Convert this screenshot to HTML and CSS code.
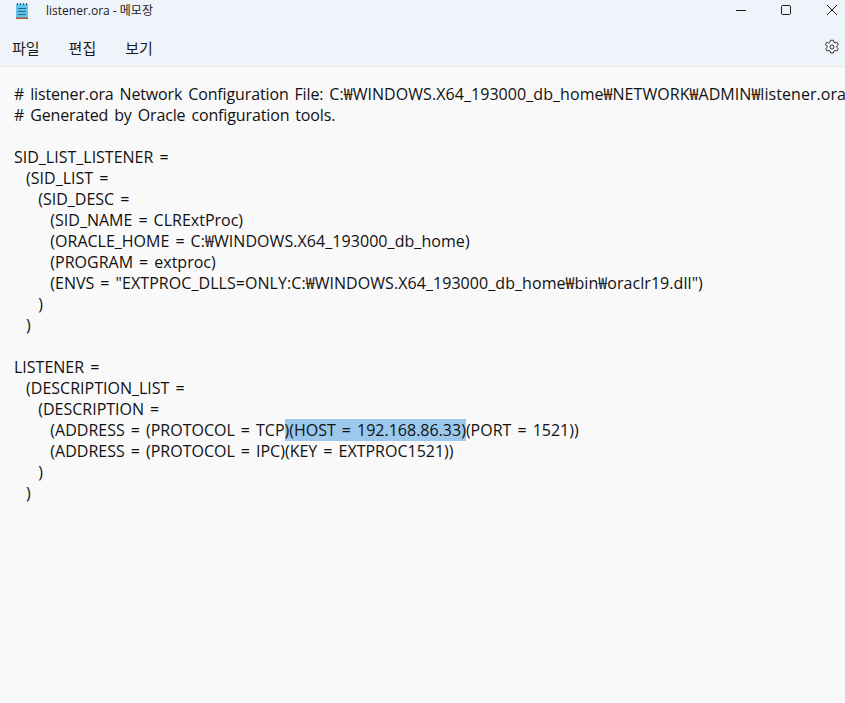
FILE: index.html
```html
<!DOCTYPE html>
<html lang="ko">
<head>
<meta charset="utf-8">
<title>listener.ora - 메모장</title>
<link rel="stylesheet" href="styles.css">
</head>
<body>
<div class="window">
  <header class="chrome">
    <div class="titlebar">
      <svg class="app-icon" width="16" height="20" viewBox="0 0 16 20" aria-hidden="true">
        <rect x="2" y="4" width="12" height="14" fill="#62c2e8"/>
        <rect x="2" y="17.500" width="12" height="1.500" fill="#b5562a"/>
        <path d="M3.500 3v2M6.500 3v2M9.500 3v2M12.500 3v2" stroke="#2f6f8f" stroke-width="1.200"/>
        <path d="M4 8.500h8M4 11.500h8M4 14.500h8" stroke="#1b6d96" stroke-width="1"/>
      </svg>
      <span class="title">listener.ora - 메모장</span>
      <div class="window-controls">
        <svg class="ctl ctl-min" width="12" height="12" viewBox="0 0 12 12"><path d="M1 6.500h10" stroke="#1a1a1a"/></svg>
        <svg class="ctl" width="12" height="12" viewBox="0 0 12 12"><rect x="1.500" y="1.500" width="9" height="9" rx="1.200" fill="none" stroke="#1a1a1a"/></svg>
        <svg class="ctl" width="12" height="12" viewBox="0 0 12 12"><path d="M1 1l10 10M11 1L1 11" stroke="#1a1a1a"/></svg>
      </div>
    </div>
    <nav class="menubar">
      <span class="menu-item">파일</span>
      <span class="menu-item">편집</span>
      <span class="menu-item">보기</span>
      <svg class="gear" width="16" height="16" viewBox="0 0 16 16" aria-hidden="true">
        <path d="M6.600 1.200h2.800l.4 1.900 1.200.7 1.900-.6 1.400 2.400-1.500 1.300v1.400l1.500 1.300-1.400 2.400-1.900-.6-1.200.7-.4 1.900H6.600l-.4-1.900-1.200-.7-1.900.6-1.400-2.400 1.500-1.300V7.100L1.300 5.800l1.400-2.400 1.900.6 1.200-.7z" fill="none" stroke="#3a3a3a"/>
        <circle cx="8" cy="8" r="2" fill="none" stroke="#3a3a3a"/>
      </svg>
    </nav>
  </header>
  <main class="editor"><pre class="text"><span class="comment"># listener.ora Network Configuration File: </span><span class="path">C:₩WINDOWS.X64_193000_db_home₩NETWORK₩ADMIN₩listener.ora</span>
<span class="comment"># Generated by Oracle configuration tools.</span>

SID_LIST_LISTENER =
  (SID_LIST =
    (SID_DESC =
      (SID_NAME = CLRExtProc)
      (ORACLE_HOME = <span class="path">C:₩WINDOWS.X64_193000_db_home</span>)
      (PROGRAM = extproc)
      (ENVS = <span class="path">"EXTPROC_DLLS=ONLY:C:₩WINDOWS.X64_193000_db_home₩bin₩oraclr19.dll"</span>)
    )
  )

LISTENER =
  (DESCRIPTION_LIST =
    (DESCRIPTION =
      (ADDRESS = (PROTOCOL = TCP<span class="selection">)(HOST = 192.168.86.33)</span>(PORT = 1521))
      (ADDRESS = (PROTOCOL = IPC)(KEY = EXTPROC1521))
    )
  )
</pre></main>
</div>
</body>
</html>
```

FILE: styles.css
```css
html, body {
  margin: 0;
  height: 100%;
}
body {
  font-family: "Open Sans", "Noto Sans CJK KR", sans-serif;
  color: #1a1a1a;
  overflow: hidden;
}
.window {
  display: flex;
  flex-direction: column;
  height: 100%;
  background: #f9f9f9;
}
.chrome {
  background: #eff3fa;
  border-bottom: 1px solid #e8e8e8;
  height: 67px;
  box-sizing: border-box;
  flex: none;
}
.titlebar {
  display: flex;
  align-items: center;
  height: 20px;
  padding-left: 14px;
}
.app-icon { flex: none; }
.title {
  margin-left: 16px;
  font-size: 12px;
}
.window-controls {
  margin-left: auto;
  display: flex;
  gap: 34px;
  padding-right: 7px;
}
.ctl-min { margin-right: -1px; }
.menubar {
  display: flex;
  align-items: center;
  height: 32px;
  margin-top: 11px;
  padding-left: 12px;
  gap: 29px;
  font-size: 15px;
  font-family: "Noto Sans CJK KR", sans-serif;
}
.gear { margin-left: auto; margin-right: 5px; }
.editor {
  flex: 1;
  padding: 17px 0 0 14px;
  overflow: hidden;
}
.text {
  margin: 0;
  font-family: "Open Sans", "Noto Sans CJK KR", sans-serif;
  font-size: 16px;
  line-height: 21px;
  white-space: pre;
  word-spacing: 1.900px;
  color: #111;
}
.comment {
  letter-spacing: -0.130px;
}
.path {
  letter-spacing: 0.060px;
}
.selection {
  background: #9bc8ec;
}
```
